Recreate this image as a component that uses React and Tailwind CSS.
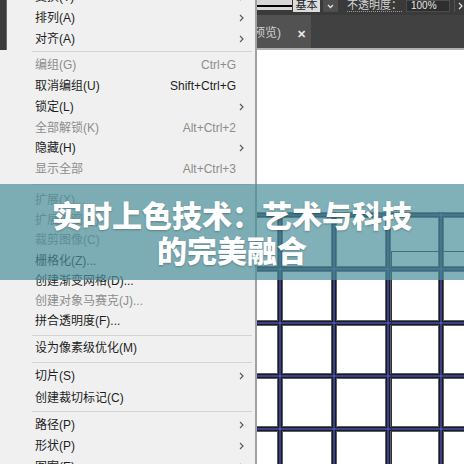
import React from "react";

// menu rows grouped by section, heights tuned to the screenshot
const sections = [
  {
    h: "h-[21px]",
    items: [
      { t: "变换(T)", sub: true },
      { t: "排列(A)", sub: true },
      { t: "对齐(A)", sub: true },
    ],
    sep: "h-[6px] pt-[2px]",
  },
  {
    h: "h-[20.75px]",
    items: [
      { t: "编组(G)", k: "Ctrl+G", dis: true },
      { t: "取消编组(U)", k: "Shift+Ctrl+G" },
      { t: "锁定(L)", sub: true },
      { t: "全部解锁(K)", k: "Alt+Ctrl+2", dis: true },
      { t: "隐藏(H)", sub: true },
      { t: "显示全部", k: "Alt+Ctrl+3", dis: true },
    ],
    sep: "h-[10px] pt-[4px]",
  },
  {
    h: "h-[20.3px]",
    items: [
      { t: "扩展(X)...", dis: true },
      { t: "扩展外观(E)", dis: true },
      { t: "裁剪图像(C)", dis: true },
      { t: "栅格化(Z)..." },
      { t: "创建渐变网格(D)..." },
      { t: "创建对象马赛克(J)...", dis: true },
      { t: "拼合透明度(F)..." },
    ],
    sep: "h-[6px] pt-[3px]",
  },
  {
    h: "h-[21px]",
    items: [{ t: "设为像素级优化(M)" }],
    sep: "h-[7px] pt-[3px]",
  },
  {
    h: "h-[21.5px]",
    items: [{ t: "切片(S)", sub: true }, { t: "创建裁切标记(C)" }],
    sep: "h-[6px] pt-[2px]",
  },
  {
    h: "h-[21px]",
    items: [
      { t: "路径(P)", sub: true },
      { t: "形状(P)", sub: true },
      { t: "图案(E)", sub: true },
    ],
  },
];

const vLines = [23, 77, 131, 184];
const hLines = [165, 219, 273, 326, 379];

function Chevron() {
  return (
    <svg width="5" height="8" viewBox="0 0 5 8" className="mr-[11px] shrink-0">
      <polyline points="1,1 4,4 1,7" fill="none" stroke="#5c5c5c" strokeWidth="1.2" />
    </svg>
  );
}

function Row({ item, h }) {
  return (
    <div className={`${h} shrink-0 flex items-center pl-[28px] ${item.dis ? "text-[#8d8d8d]" : "text-[#1e1e1e]"}`}>
      <span className="flex-1 whitespace-nowrap">{item.t}</span>
      {item.k && <span className="mr-[19px] whitespace-nowrap">{item.k}</span>}
      {item.sub && <Chevron />}
    </div>
  );
}

function Grid() {
  const lines = (stroke, width) => (
    <g stroke={stroke} strokeWidth={width}>
      {hLines.map((y) => (
        <line key={"h" + y} x1="0" y1={y} x2="207" y2={y} />
      ))}
      {vLines.map((x) => (
        <line key={"v" + x} x1={x} y1="162" x2={x} y2="414" />
      ))}
    </g>
  );
  return (
    <svg width="207" height="414" viewBox="0 0 207 414" className="block">
      {lines("#5e5e5e", 6)}
      {lines("#1a1a25", 4)}
      {lines("#5868ec", 1)}
      <rect x="134.5" y="201.5" width="120" height="260" fill="none" stroke="#24303a" strokeWidth="1" />
    </svg>
  );
}

export default function App() {
  return (
    <div className="relative w-[464px] h-[464px] overflow-hidden flex bg-[#f0f0f0] font-['Liberation_Sans','Noto_Sans_CJK_SC',sans-serif]">
      {/* left strip behind the menu */}
      <div className="w-[7px] flex flex-col">
        <div className="h-[50px] bg-[#3b3b3b] border-r border-[#6a6a6a]" />
      </div>

      {/* Object menu */}
      <div className="w-[248px] bg-[#f0f0f0] text-[12px] flex flex-col -mt-[14px]">
        {sections.map((s, i) => (
          <React.Fragment key={i}>
            {s.items.map((it) => (
              <Row key={it.t} item={it} h={s.h} />
            ))}
            {s.sep && (
              <div className={`${s.sep} shrink-0`}>
                <div className="h-px bg-[#d4d4d4] ml-[25px] mr-[3px]" />
              </div>
            )}
          </React.Fragment>
        ))}
      </div>
      <div className="w-[2px] bg-[#a2a2a2]" />

      {/* document area */}
      <div className="flex-1 flex flex-col">
        <div className="h-[15px] shrink-0 bg-[#3a3a3a] flex items-start text-[11px]">
          <div className="w-[35px] h-[10px] bg-[#d6d6d6] pt-[5px]">
            <div className="h-[2px] bg-black" />
          </div>
          <div className="ml-[1px] w-[27px] h-[12px] bg-[#dcdcdc] text-[#222] leading-[11px] text-center">基本</div>
          <div className="ml-[3px] w-[15px] h-[12px] bg-[#4e4e4e] flex items-center justify-center">
            <svg width="7" height="5" viewBox="0 0 7 5">
              <polyline points="1,1 3.5,3.5 6,1" fill="none" stroke="#e0e0e0" strokeWidth="1.3" />
            </svg>
          </div>
          <div className="ml-[9px] text-[#d4d4d4] leading-[11px] border-b border-dotted border-[#9a9a9a]">不透明度：</div>
          <div className="ml-[4px] w-[44px] h-[12px] bg-[#2e2e2e] border border-[#4c4c4c] text-[#e6e6e6] text-[10px] leading-[10px] pl-[4px]">100%</div>
          <div className="ml-[4px] h-[12px] border-l border-[#555] pl-[3px] flex items-center">
            <svg width="5" height="8" viewBox="0 0 5 8">
              <polyline points="1,1 4,4 1,7" fill="none" stroke="#e0e0e0" strokeWidth="1.3" />
            </svg>
          </div>
        </div>

        <div className="h-[33px] shrink-0 bg-[#414141] flex">
          <div className="w-[54px] bg-[#525252] flex items-end pb-[6px] overflow-hidden text-[12px] text-[#cfcfcf]">
            <span className="-ml-[4px] whitespace-nowrap">预览)</span>
            <span className="ml-[16px] text-[#e8e8e8] text-[11px] font-bold">✕</span>
          </div>
        </div>
        <div className="h-[2px] shrink-0 bg-[#b0b0b0]" />

        <div className="flex-1 bg-white overflow-hidden">
          <Grid />
        </div>
      </div>

      {/* title banner */}
      <div className="absolute left-0 right-0 top-[184px] h-[96px] bg-[rgba(74,142,154,0.7)] flex flex-col items-center justify-center text-white text-[30px] leading-[35.5px] font-black font-['Noto_Sans_CJK_SC',sans-serif] [text-shadow:0_1px_2px_rgba(0,0,0,0.25)]">
        <div>实时上色技术：艺术与科技</div>
        <div>的完美融合</div>
      </div>
    </div>
  );
}
